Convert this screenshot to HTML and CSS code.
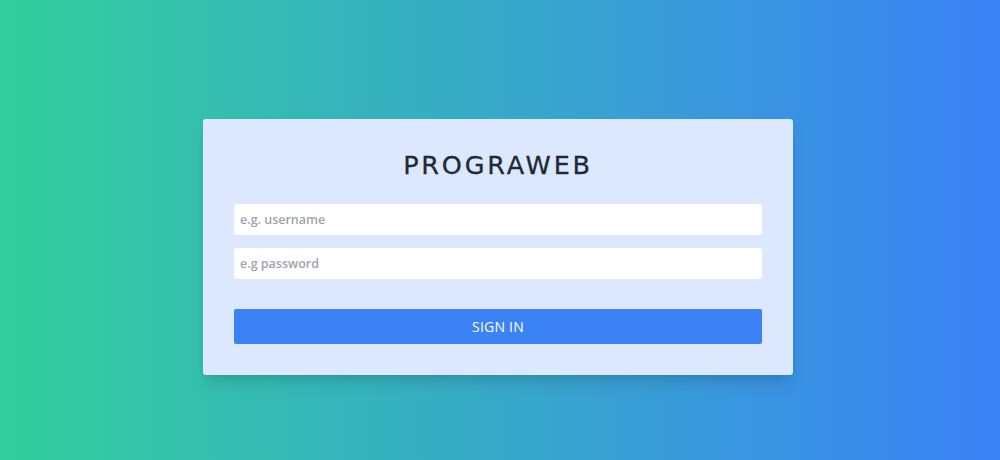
FILE: index.html
```html
<!DOCTYPE html>
<html lang="en">
<head>
<meta charset="utf-8">
<title>PROGRAWEB</title>
<link rel="stylesheet" href="styles.css">
</head>
<body>
<main class="page">
  <form class="card">
    <h1 class="title">PROGRAWEB</h1>
    <input class="field" type="text" placeholder="e.g. username">
    <input class="field field-pass" type="password" placeholder="e.g password">
    <button class="btn" type="button">SIGN IN</button>
  </form>
</main>
</body>
</html>
```

FILE: styles.css
```css
html, body {
  margin: 0;
  padding: 0;
  height: 100%;
}

body {
  font-family: "Open Sans", "Liberation Sans", sans-serif;
  background: linear-gradient(to right, #33cf9b 0%, #3b82f6 100%);
  overflow: hidden;
}

.page {
  box-sizing: border-box;
  height: 460px;
  display: flex;
  justify-content: center;
  align-items: flex-start;
  padding-top: 119px;
  padding-right: 4px;
}

.card {
  box-sizing: border-box;
  width: 590px;
  height: 256px;
  background: #dbe8fd;
  border-radius: 3px;
  padding: 28px 31px 31px;
  display: flex;
  flex-direction: column;
  box-shadow: 0 10px 15px -3px rgba(0, 0, 0, 0.12), 0 4px 6px -2px rgba(0, 0, 0, 0.06);
}

.title {
  margin: 0 0 21px;
  height: 36px;
  line-height: 36px;
  text-align: center;
  font-family: "DejaVu Sans", sans-serif;
  font-weight: 400;
  font-size: 25.5px;
  letter-spacing: 2.8px;
  -webkit-text-stroke: 0.3px #1f2937;
  color: #1f2937;
}

.field {
  box-sizing: border-box;
  width: 100%;
  height: 31px;
  border: none;
  border-radius: 3px;
  background: #ffffff;
  padding: 0 6px;
  font-family: "Open Sans", "Liberation Sans", sans-serif;
  font-size: 12.5px;
  font-weight: 600;
  color: #374151;
  outline: none;
}

.field::placeholder {
  color: #9ea4ae;
}

.field-pass {
  margin-top: 13px;
}

.btn {
  margin-top: 30px;
  height: 35px;
  width: 100%;
  border: none;
  border-radius: 2px;
  background: #3b82f6;
  color: #ffffff;
  font-family: "Open Sans", "Liberation Sans", sans-serif;
  font-size: 14px;
  letter-spacing: 0.2px;
  cursor: pointer;
}
```
